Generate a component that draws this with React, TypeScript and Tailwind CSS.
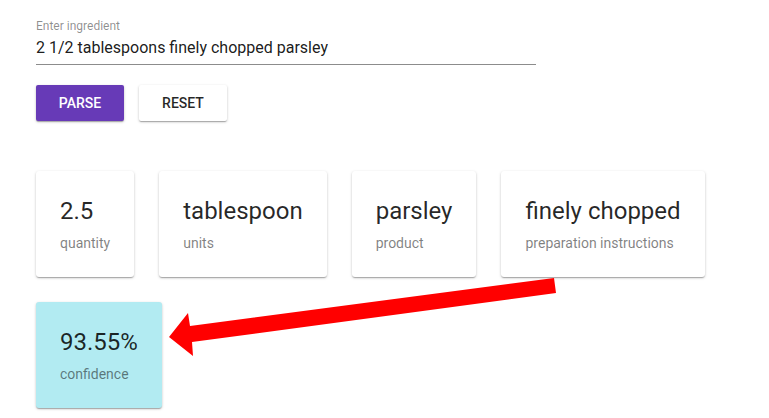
import { useState } from 'react';

type Field = {
  value: string;
  label: string;
  highlight?: boolean;
};

const cardShadow =
  'shadow-[0_1px_3px_rgba(0,0,0,0.2),0_1px_1px_rgba(0,0,0,0.14),0_2px_1px_-1px_rgba(0,0,0,0.12)]';

const ResultCard = ({ value, label, highlight }: Field) => (
  <div
    className={`rounded-[3px] p-6 ${cardShadow} ${highlight ? 'bg-[#b2ebf2]' : 'bg-white'}`}
  >
    <div className="text-[24px] leading-8 text-black/85">{value}</div>
    <div className="mt-1.5 text-[14px] leading-5 text-black/50">{label}</div>
  </div>
);

export default function App() {
  const [ingredient, setIngredient] = useState('2 1/2 tablespoons finely chopped parsley');

  // Parsed result of the ingredient line
  const fields: Field[] = [
    { value: '2.5', label: 'quantity' },
    { value: 'tablespoon', label: 'units' },
    { value: 'parsley', label: 'product' },
    { value: 'finely chopped', label: 'preparation instructions' },
    { value: '93.55%', label: 'confidence', highlight: true },
  ];

  return (
    <div
      className="relative h-[418px] w-[769px] overflow-hidden bg-white pl-9 pt-[18px]"
      style={{ fontFamily: 'Roboto, "Liberation Sans", sans-serif' }}
    >
      {/* Ingredient input */}
      <div className="w-[500px]">
        <label className="block text-[12px] leading-4 text-black/45">Enter ingredient</label>
        <input
          className="mt-[2px] block w-full border-b border-black/45 bg-transparent pb-[4px] text-[16px] leading-6 text-black/90 outline-none"
          value={ingredient}
          onChange={e => setIngredient(e.target.value)}
        />
      </div>

      {/* Actions */}
      <div className="mt-5 flex gap-[15px]">
        <button
          className={`h-9 min-w-[88px] rounded-[2px] bg-[#673ab7] px-4 text-[14px] font-medium uppercase text-white ${cardShadow}`}
        >
          Parse
        </button>
        <button
          className={`h-9 min-w-[88px] rounded-[2px] bg-white px-4 text-[14px] font-medium uppercase text-black/85 ${cardShadow}`}
        >
          Reset
        </button>
      </div>

      {/* Parsed fields */}
      <div className="mt-[50px] flex flex-wrap items-start gap-[25px]">
        {fields.map(field => (
          <ResultCard key={field.label} {...field} />
        ))}
      </div>

      {/* Annotation arrow */}
      <svg
        className="pointer-events-none absolute inset-0"
        width="769"
        height="418"
        viewBox="0 0 769 418"
      >
        <polygon
          points="169,337 188,313 190,326 554,278 556,293 192,342 193,356"
          fill="#ff0000"
        />
      </svg>
    </div>
  );
}
